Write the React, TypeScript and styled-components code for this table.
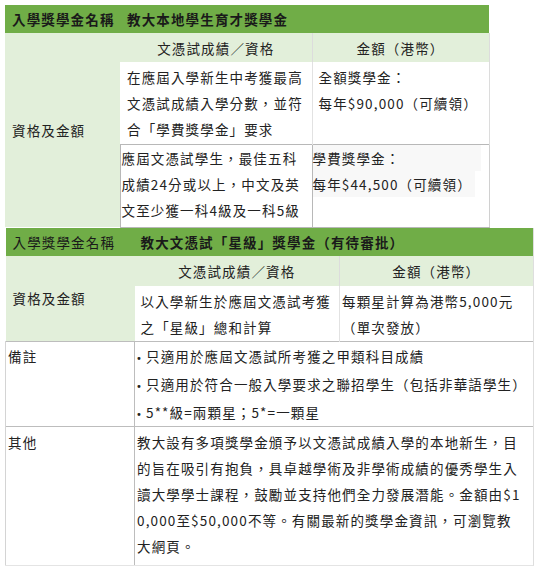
import { FC, ReactNode } from "react";
import styled, { createGlobalStyle } from "styled-components";

const GlobalStyle = createGlobalStyle`
  html, body {
    margin: 0;
    padding: 0;
    background: #ffffff;
  }
  body {
    font-family: "Noto Sans CJK TC", "Noto Sans CJK SC", sans-serif;
    color: #222;
  }
  td, th {
    box-sizing: border-box;
  }
`;

const GREEN = "#70ad47";
const LIGHT = "#e2efda";

const Page = styled.div`
  padding: 5px 0 0 5px;
`;

const Table = styled.table<{ $width: number }>`
  width: ${(p) => p.$width}px;
  table-layout: fixed;
  border-collapse: collapse;
  border-spacing: 0;
  font-size: 13.5px;
  letter-spacing: 1.15px;
  line-height: 26px;
`;

const HeadCell = styled.td<{ $bold?: boolean; $pad?: number }>`
  background: ${GREEN};
  height: 28px;
  padding: 0 0 0 ${(p) => p.$pad ?? 7}px;
  font-weight: ${(p) => (p.$bold ? 700 : 400)};
  color: #1a1a1a;
  white-space: nowrap;
  vertical-align: middle;
`;

const SubHead = styled.th<{ $h: number; $line?: boolean }>`
  background: ${LIGHT};
  height: ${(p) => p.$h}px;
  padding: 0;
  font-weight: 400;
  text-align: center;
  vertical-align: middle;
  border-right: ${(p) => (p.$line ? "1px solid #dcdcdc" : "none")};
`;

const LabelCell = styled.td<{ $green?: boolean; $pad?: number }>`
  background: ${(p) => (p.$green ? LIGHT : "#fff")};
  vertical-align: ${(p) => (p.$green ? "middle" : "top")};
  padding: ${(p) => (p.$green ? "0 0 0 7px" : `${p.$pad ?? 2}px 0 0 2px`)};
  border-left: ${(p) => (p.$green ? "none" : "1px solid #d4d4d4")};
  border-right: ${(p) => (p.$green ? "none" : "1px solid #bdbdbd")};
  white-space: nowrap;
`;

const BodyCell = styled.td<{
  $h: number;
  $padTop?: number;
  $padLeft?: number;
  $boxed?: boolean;
  $rightLine?: string;
  $lh?: number;
}>`
  height: ${(p) => p.$h}px;
  background: #fff;
  vertical-align: top;
  padding: ${(p) => p.$padTop ?? 2}px 0 0 ${(p) => p.$padLeft ?? 6}px;
  border: ${(p) => (p.$boxed ? "1px solid #b8b8b8" : "none")};
  border-right: ${(p) =>
    p.$rightLine ? `1px solid ${p.$rightLine}` : p.$boxed ? "1px solid #b8b8b8" : "none"};
  line-height: ${(p) => p.$lh ?? 26}px;
  white-space: nowrap;
  overflow: visible;
`;

const Row = styled.tr<{ $bottom?: string }>`
  border-bottom: ${(p) => (p.$bottom ? `1px solid ${p.$bottom}` : "none")};
`;

const Line = styled.div<{ $shade?: boolean }>`
  display: block;
  background: ${(p) => (p.$shade ? "#f8f8f8" : "transparent")};
  margin-right: ${(p) => (p.$shade ? "8px" : "0")};
  &:nth-child(2) {
    margin-right: ${(p) => (p.$shade ? "14px" : "0")};
  }
`;

const Lines: FC<{ items: ReactNode[]; shade?: boolean }> = ({ items, shade }) => (
  <>
    {items.map((t, i) => (
      <Line key={i} $shade={shade}>
        {t}
      </Line>
    ))}
  </>
);

const Bullet = styled.div`
  display: block;
  height: 28px;
  &::before {
    content: "•";
    display: inline-block;
    width: 10px;
    font-family: "DejaVu Sans", sans-serif;
    font-size: 10px;
    line-height: 10px;
    letter-spacing: 0;
  }
`;

const Outer = styled.div`
  border-right: 1px solid #dedede;
  border-bottom: 1px solid #e4e4e4;
  width: fit-content;
`;

export default function App() {
  return (
    <Page>
      <GlobalStyle />
      <Table $width={484}>
        <colgroup>
          <col style={{ width: 115 }} />
          <col style={{ width: 192 }} />
          <col style={{ width: 177 }} />
        </colgroup>
        <tbody>
          <tr>
            <HeadCell $bold>入學獎學金名稱</HeadCell>
            <HeadCell $bold colSpan={2}>
              教大本地學生育才獎學金
            </HeadCell>
          </tr>
          <tr>
            <LabelCell $green rowSpan={3}>
              資格及金額
            </LabelCell>
            <SubHead $h={29} $line>
              文憑試成績／資格
            </SubHead>
            <SubHead $h={29} $line>
              金額（港幣）
            </SubHead>
          </tr>
          <tr>
            <BodyCell $h={82} $padLeft={7} $rightLine="#e2e2e2">
              <Lines items={["在應屆入學新生中考獲最高", "文憑試成績入學分數，並符", "合「學費獎學金」要求"]} />
            </BodyCell>
            <BodyCell $h={82} $padLeft={6} $rightLine="#dcdcdc">
              <Lines items={["全額獎學金：", "每年$90,000（可續領）"]} />
            </BodyCell>
          </tr>
          <tr>
            <BodyCell $h={83} $boxed $padTop={0} $padLeft={1}>
              <Lines items={["應屆文憑試學生，最佳五科", "成績24分或以上，中文及英", "文至少獲一科4級及一科5級"]} />
            </BodyCell>
            <BodyCell $h={83} $boxed $padTop={0} $padLeft={0} $rightLine="#d0d0d0">
              <Lines shade items={["學費獎學金：", "每年$44,500（可續領）"]} />
            </BodyCell>
          </tr>
        </tbody>
      </Table>
      <Outer>
        <Table $width={527}>
          <colgroup>
            <col style={{ width: 129 }} />
            <col style={{ width: 205 }} />
            <col style={{ width: 193 }} />
          </colgroup>
          <tbody>
            <tr>
              <HeadCell>入學獎學金名稱</HeadCell>
              <HeadCell $bold $pad={6} colSpan={2}>
                教大文憑試「星級」獎學金（有待審批）
              </HeadCell>
            </tr>
            <tr>
              <LabelCell $green rowSpan={2}>
                資格及金額
              </LabelCell>
              <SubHead $h={30} $line>
                文憑試成績／資格
              </SubHead>
              <SubHead $h={30}>金額（港幣）</SubHead>
            </tr>
            <Row $bottom="#bdbdbd">
              <BodyCell $h={56} $padTop={2} $padLeft={6} $rightLine="#e2e2e2">
                <Lines items={["以入學新生於應屆文憑試考獲", "之「星級」總和計算"]} />
              </BodyCell>
              <BodyCell $h={56} $padTop={2} $padLeft={2}>
                <Lines items={["每顆星計算為港幣5,000元", "（單次發放）"]} />
              </BodyCell>
            </Row>
            <Row $bottom="#bdbdbd">
              <LabelCell $pad={1}>備註</LabelCell>
              <BodyCell colSpan={2} $h={84} $padTop={0} $padLeft={1} $lh={28}>
                <Bullet>只適用於應屆文憑試所考獲之甲類科目成績</Bullet>
                <Bullet>只適用於符合一般入學要求之聯招學生（包括非華語學生）</Bullet>
                <Bullet>5**級=兩顆星；5*=一顆星</Bullet>
              </BodyCell>
            </Row>
            <tr>
              <LabelCell $pad={2}>其他</LabelCell>
              <BodyCell colSpan={2} $h={138} $padTop={2} $padLeft={2}>
                <Lines
                  items={[
                    "教大設有多項獎學金頒予以文憑試成績入學的本地新生，目",
                    "的旨在吸引有抱負，具卓越學術及非學術成績的優秀學生入",
                    "讀大學學士課程，鼓勵並支持他們全力發展潛能。金額由$1",
                    "0,000至$50,000不等。有關最新的獎學金資訊，可瀏覽教",
                    "大網頁。",
                  ]}
                />
              </BodyCell>
            </tr>
          </tbody>
        </Table>
      </Outer>
    </Page>
  );
}
